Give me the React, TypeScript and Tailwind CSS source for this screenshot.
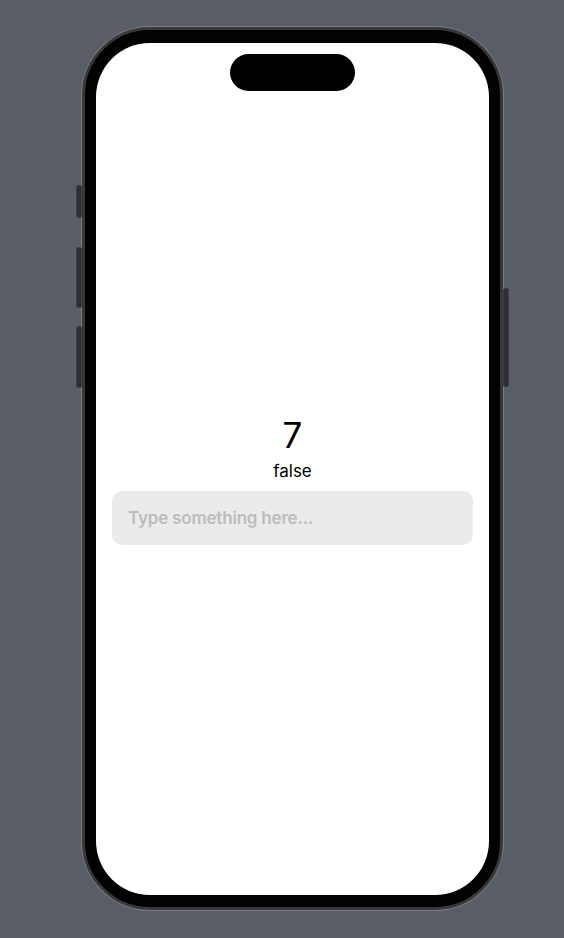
import { useState } from "react";

function SideButton({ className }: { className: string }) {
  return <div className={`absolute w-[6px] rounded-[2px] bg-[#2e2f33] border border-[#3c3d41] ${className}`} />;
}

export default function App() {
  const [text, setText] = useState("");

  return (
    <div className="w-[564px] h-[938px] bg-[#595e66] pl-[82px] pt-[27px] overflow-hidden font-['Inter','Liberation_Sans',sans-serif]">
      <div className="relative w-[421px] h-[883px]">
        {/* hardware buttons sit on the frame edge */}
        <SideButton className="-left-[6px] top-[158px] h-[33px]" />
        <SideButton className="-left-[6px] top-[220px] h-[61px]" />
        <SideButton className="-left-[6px] top-[299px] h-[62px]" />
        <SideButton className="-right-[6px] top-[261px] h-[99px]" />

        <div className="h-full rounded-[68px] border-[3px] border-[#38383a] bg-[#020202] px-[11px] pt-[13px] pb-[12px] shadow-[0_0_0_1px_#7a7d83]">
          <div className="flex h-[852px] w-[393px] flex-col items-center rounded-[54px] bg-white overflow-hidden">
            {/* dynamic island */}
            <div className="mt-[11px] h-[37px] w-[125px] shrink-0 rounded-full bg-black" />

            <div className="flex w-full flex-col items-center px-4 pt-[324px]">
              <div className="text-[35px] leading-[40px] font-normal text-black">7</div>
              <div className="mt-[5px] text-[17px] leading-[22px] text-black">false</div>
              <input
                value={text}
                onChange={(e) => setText(e.target.value)}
                placeholder="Type something here..."
                className="mt-[9px] h-[54px] w-full rounded-[10px] bg-[#ebebeb] px-4 text-[17px] font-semibold tracking-[-0.2px] text-black placeholder:text-[#bcbcbe] outline-none"
              />
            </div>
          </div>
        </div>
      </div>
    </div>
  );
}
